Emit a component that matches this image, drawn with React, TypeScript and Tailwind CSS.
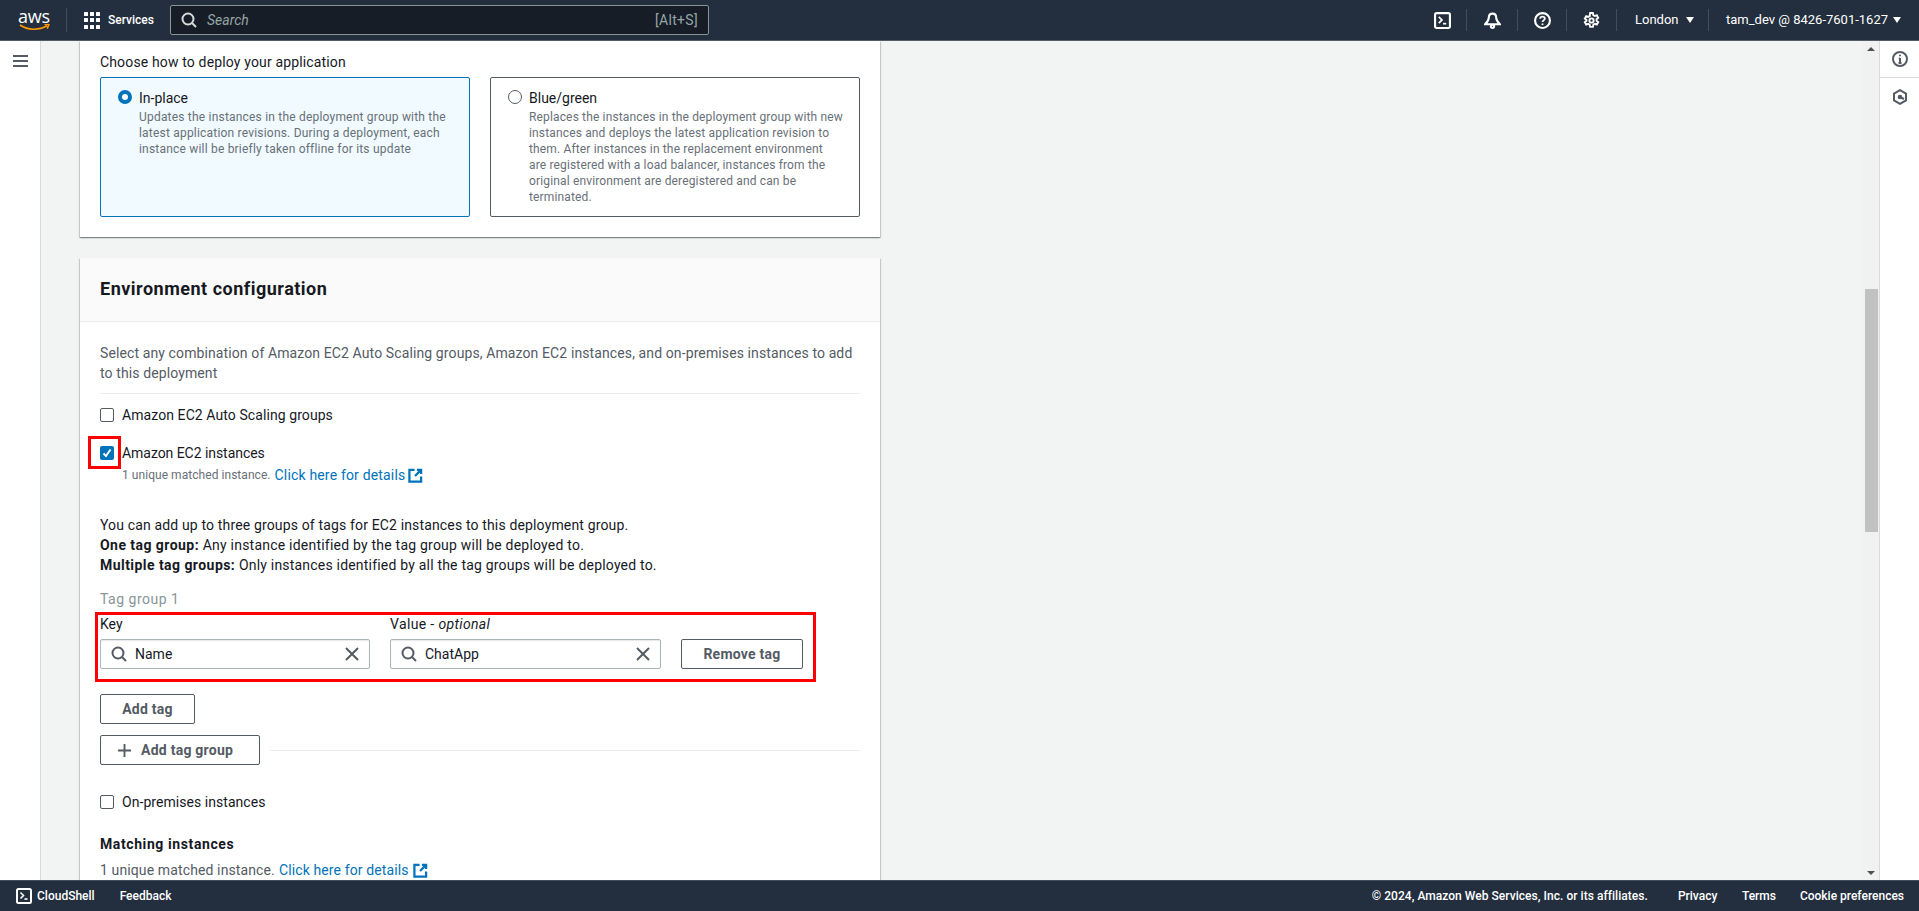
import React from "react";

const Sep = () => <div className="w-px h-[22px] bg-[#414d5c]" />;

const Terminal = ({ size = 16 }: { size?: number }) => (
  <svg width={size} height={size} viewBox="0 0 16 16" fill="none" stroke="currentColor" strokeWidth="2">
    <rect x="1" y="1" width="14" height="14" rx="1.5" />
    <path d="M4.5 4.5 7.5 7.5 4.5 10.5" strokeWidth="1.6" />
    <path d="M8.5 11h3" strokeWidth="1.6" />
  </svg>
);

const Ext = () => (
  <svg width="15" height="15" viewBox="0 0 16 16" fill="none" stroke="#0073bb" strokeWidth="2.4">
    <path d="M7 2H1.500v12.500H14V9" />
    <path d="M9.500 2h4.500v4.500" />
    <path d="M14 2 7.500 8.500" />
  </svg>
);

const Search = ({ color = "#545b64" }: { color?: string }) => (
  <svg width="16" height="16" viewBox="0 0 16 16" fill="none" stroke={color} strokeWidth="2">
    <circle cx="7" cy="7" r="5.5" />
    <path d="m11 11 4 4" />
  </svg>
);

const Close = () => (
  <svg width="14" height="14" viewBox="0 0 14 14" fill="none" stroke="#545b64" strokeWidth="2">
    <path d="M1 1l12 12M13 1 1 13" />
  </svg>
);

const Checkbox = ({ on = false }: { on?: boolean }) =>
  on ? (
    <span className="w-[14px] h-[14px] rounded-[2px] bg-[#0073bb] flex items-center justify-center shrink-0">
      <svg width="10" height="10" viewBox="0 0 10 10" fill="none" stroke="#fff" strokeWidth="2">
        <path d="M1.5 5.5 4 8l4.5-6.5" />
      </svg>
    </span>
  ) : (
    <span className="w-[14px] h-[14px] rounded-[2px] border border-[#545b64] bg-white shrink-0" />
  );

const Tile = ({ on, title, lines, width, track }: { on?: boolean; title: string; lines: string[]; width: string; track: string }) => (
  <div className={`${width} h-[140px] rounded-[2px] border px-[17px] pt-[10px] flex gap-[7px] ${on ? "border-[#0073bb] bg-[#f1faff]" : "border-[#545b64] bg-white"}`}>
    {on ? (
      <span className="w-[14px] h-[14px] mt-[2px] rounded-full border-[4px] border-[#0073bb] bg-white shrink-0" />
    ) : (
      <span className="w-[14px] h-[14px] mt-[2px] rounded-full border border-[#545b64] bg-white shrink-0" />
    )}
    <div>
      <div className="text-[14px] leading-[20px] text-[#16191f]">{title}</div>
      <div className={`text-[12px] leading-[16px] text-[#687078] mt-px ${track}`}>
        {lines.map((l) => (
          <div key={l} className="whitespace-nowrap">{l}</div>
        ))}
      </div>
    </div>
  </div>
);

const TagInput = ({ value, width }: { value: string; width: string }) => (
  <div className={`${width} h-[30px] rounded-[2px] border border-[#aab7b8] bg-white flex items-center pl-[10px] pr-[10px] shadow-[inset_0_1px_1px_0_rgba(0,28,36,0.1)]`}>
    <Search />
    <span className="ml-[8px] text-[14px] text-[#16191f] flex-1">{value}</span>
    <Close />
  </div>
);

const Btn = ({ children, width, className = "justify-center" }: { children: React.ReactNode; width: string; className?: string }) => (
  <div className={`${width} ${className} h-[30px] rounded-[2px] border border-[#545b64] bg-white flex items-center text-[14px] font-bold tracking-[0.25px] text-[#545b64] shrink-0`}>
    {children}
  </div>
);

export default function App() {
  return (
    <div className="h-[911px] w-[1919px] flex flex-col overflow-hidden bg-white font-['Roboto',sans-serif] text-[14px] text-[#16191f]">
      {/* top nav */}
      <header className="h-[41px] shrink-0 bg-[#232f3e] border-b border-[#545b64] flex items-center text-white">
        <div className="w-[66px] shrink-0 pl-[18px] flex flex-col items-start">
          <div className="w-[32px] flex flex-col items-center">
            <span className="text-[18px] leading-[14px] tracking-[-0.2px] font-['Open_Sans',sans-serif]">aws</span>
            <svg width="31" height="7" viewBox="0 0 31 7" fill="none" className="mt-[1px]">
              <path d="M1 1c8 5.5 19 5.5 27 .8" stroke="#ff9900" strokeWidth="1.7" />
              <path d="M25.5.6 30 .4 28.2 4.6" stroke="#ff9900" strokeWidth="1.5" />
            </svg>
          </div>
        </div>
        <div className="w-px h-[24px] bg-[#414d5c]" />
        <div className="ml-[17px] w-[16px] grid grid-cols-3 gap-[2.5px]">
          {Array.from({ length: 9 }).map((_, i) => (
            <span key={i} className="w-[4px] h-[4px] bg-white rounded-[0.5px]" />
          ))}
        </div>
        <span className="ml-[8px] w-[45px] text-[12px] font-medium whitespace-nowrap">Services</span>
        <div className="ml-[17px] w-[539px] h-[30px] rounded-[2px] border border-[#879596] bg-[#161d26] flex items-center px-[10px]">
          <Search color="#d5dbdb" />
          <span className="ml-[10px] italic text-[#95a5a6]">Search</span>
          <span className="ml-auto text-[#95a5a6] text-[14px] tracking-[0.3px]">[Alt+S]</span>
        </div>
        <div className="ml-auto flex items-center">
          <div className="w-[47px] flex justify-center"><Terminal size={17} /></div>
          <Sep />
          <div className="w-[50px] flex justify-center">
            <svg width="17" height="17" viewBox="0 0 16 16" fill="none" stroke="#fff" strokeWidth="2">
              <path d="M8 1.500c-2.400 0-3.500 1.800-3.500 4 0 2.700-1 3.800-3.500 6h14c-2.500-2.200-3.500-3.300-3.500-6 0-2.200-1.100-4-3.500-4Z" />
              <circle cx="8" cy="13.500" r="1.500" />
            </svg>
          </div>
          <Sep />
          <div className="w-[48px] flex justify-center">
            <svg width="17" height="17" viewBox="0 0 16 16" fill="none" stroke="#fff" strokeWidth="2">
              <circle cx="8" cy="8" r="7" />
              <path d="M5.800 6.300C5.800 5 6.800 4.300 8 4.300s2.200.8 2.200 1.900c0 1.700-2.200 1.700-2.200 3.300" strokeWidth="1.700" />
              <path d="M8 10.800v1.500" strokeWidth="1.700" />
            </svg>
          </div>
          <Sep />
          <div className="w-[49px] flex justify-center">
            <svg width="17" height="17" viewBox="0 0 16 16" fill="none" stroke="#fff" strokeWidth="1.800">
              <path d="M6.700 1h2.600l.4 2 1.400.8 1.900-.7 1.300 2.300-1.500 1.300v1.600l1.500 1.300-1.300 2.300-1.900-.7-1.400.8-.4 2H6.700l-.4-2-1.400-.8-1.900.7-1.300-2.300 1.500-1.300V7.500L1.700 6.200 3 3.900l1.900.7 1.400-.8Z" />
              <circle cx="8" cy="8" r="2" />
            </svg>
          </div>
          <Sep />
          <div className="w-[91px] pl-[18px] flex items-center gap-[7px] text-[13px]">
            London
            <span className="w-0 h-0 border-l-[4.500px] border-r-[4.500px] border-t-[6px] border-l-transparent border-r-transparent border-t-white" />
          </div>
          <Sep />
          <div className="w-[210px] pl-[17px] flex items-center gap-[6px] text-[13px] whitespace-nowrap">
            <span className="w-[161px]">tam_dev @ 8426-7601-1627</span>
            <span className="w-0 h-0 border-l-[4.500px] border-r-[4.500px] border-t-[6px] border-l-transparent border-r-transparent border-t-white" />
          </div>
        </div>
      </header>

      <div className="flex-1 min-h-0 flex">
        {/* left rail */}
        <aside className="w-[41px] shrink-0 bg-white border-r border-[#d5dbdb] pt-[14px] flex justify-center">
          <svg width="15" height="12" viewBox="0 0 15 12" stroke="#545b64" strokeWidth="2">
            <path d="M0 1h15M0 6h15M0 11h15" />
          </svg>
        </aside>

        {/* content */}
        <main className="flex-1 min-w-0 bg-[#f2f3f3] overflow-hidden pl-[39px]">
          <section className="w-[800px] h-[196px] bg-white shadow-[0_1px_1px_0_rgba(0,28,36,0.3),1px_1px_1px_0_rgba(0,28,36,0.15),-1px_1px_1px_0_rgba(0,28,36,0.15)] px-[20px] pt-[11px]">
            <div className="leading-[20px] tracking-[0.15px]">Choose how to deploy your application</div>
            <div className="mt-[5px] flex gap-[20px]">
              <Tile
                on
                width="w-[370px]"
                track="tracking-[0.2px]"
                title="In-place"
                lines={[
                  "Updates the instances in the deployment group with the",
                  "latest application revisions. During a deployment, each",
                  "instance will be briefly taken offline for its update",
                ]}
              />
              <Tile
                width="w-[370px]"
                track="tracking-[0.15px]"
                title="Blue/green"
                lines={[
                  "Replaces the instances in the deployment group with new",
                  "instances and deploys the latest application revision to",
                  "them. After instances in the replacement environment",
                  "are registered with a load balancer, instances from the",
                  "original environment are deregistered and can be",
                  "terminated.",
                ]}
              />
            </div>
          </section>

          <section className="mt-[21px] w-[800px] pb-[40px] bg-white shadow-[0_1px_1px_0_rgba(0,28,36,0.3),1px_1px_1px_0_rgba(0,28,36,0.15),-1px_1px_1px_0_rgba(0,28,36,0.15)]">
            <div className="h-[64px] bg-[#fafafa] border-b border-[#eaeded] px-[20px] flex items-center">
              <h2 className="text-[18px] font-bold leading-[22px] tracking-[0.5px] -mt-[2px]">Environment configuration</h2>
            </div>
            <div className="px-[20px] pt-[21px]">
              <p className="text-[#545b64] leading-[20px] tracking-[0.11px] pb-[10px] border-b border-[#eaeded]">
                Select any combination of Amazon EC2 Auto Scaling groups, Amazon EC2 instances, and on-premises instances to add
                <br />
                to this deployment
              </p>

              <div className="mt-[11px] flex items-center gap-[8px] h-[20px]">
                <Checkbox />
                <span className="tracking-[0.08px]">Amazon EC2 Auto Scaling groups</span>
              </div>

              <div className="mt-[18px] flex items-center gap-[8px] h-[20px] relative">
                <Checkbox on />
                <span className="tracking-[-0.05px]">Amazon EC2 instances</span>
                <span className="absolute left-[-12px] top-[-7px] w-[33px] h-[33px] border-[3px] border-[#f00]" />
              </div>
              <div className="pl-[22px] h-[20px] flex items-center mt-[2px]">
                <span className="text-[12px] text-[#687078] tracking-[0.05px]">1 unique matched instance.</span>
                <span className="ml-[4px] text-[#0073bb] tracking-[0.17px]">Click here for details</span>
                <span className="ml-[3px]"><Ext /></span>
              </div>

              <div className="mt-[30px] leading-[20px] tracking-[0.15px]">
                <div>You can add up to three groups of tags for EC2 instances to this deployment group.</div>
                <div className="tracking-[0.22px]"><b className="tracking-[0.45px]">One tag group:</b> Any instance identified by the tag group will be deployed to.</div>
                <div className="tracking-[0.2px]"><b className="tracking-[0.45px]">Multiple tag groups:</b> Only instances identified by all the tag groups will be deployed to.</div>
              </div>

              <div className="mt-[14px] leading-[20px] text-[#879596] tracking-[0.5px]">Tag group 1</div>

              <div className="relative mt-[5px] flex items-end gap-[20px] w-[703px]">
                <div>
                  <div className="leading-[20px] mb-[5px]">Key</div>
                  <TagInput value="Name" width="w-[270px]" />
                </div>
                <div>
                  <div className="leading-[20px] mb-[5px] tracking-[0.35px]">Value - <i>optional</i></div>
                  <TagInput value="ChatApp" width="w-[271px]" />
                </div>
                <Btn width="w-[122px]">Remove tag</Btn>
                <span className="absolute left-[-5px] top-[-2px] w-[721px] h-[70px] border-[3px] border-[#f00]" />
              </div>

              <div className="mt-[25px]">
                <Btn width="w-[95px]">Add tag</Btn>
              </div>

              <div className="mt-[11px] flex items-center">
                <Btn width="w-[160px]" className="justify-start pl-[16px] gap-[9px]">
                  <svg width="15" height="15" viewBox="0 0 16 16" stroke="#545b64" strokeWidth="2">
                    <path d="M8 1v14M1 8h14" />
                  </svg>
                  Add tag group
                </Btn>
                <div className="ml-[10px] flex-1 h-px bg-[#eaeded]" />
              </div>

              <div className="mt-[27px] flex items-center gap-[8px] h-[20px]">
                <Checkbox />
                <span className="tracking-[0.05px]">On-premises instances</span>
              </div>

              <div className="mt-[22px] font-bold leading-[20px] tracking-[0.6px]">Matching instances</div>
              <div className="mt-[6px] flex items-center leading-[20px] tracking-[0.12px]">
                <span className="text-[#545b64]">1 unique matched instance.</span>
                <span className="ml-[4px] text-[#0073bb]">Click here for details</span>
                <span className="ml-[4px]"><Ext /></span>
              </div>
            </div>
          </section>
        </main>

        {/* scrollbar */}
        <div className="w-[16px] shrink-0 bg-[#f1f1f1] flex flex-col items-center pt-[6px] pb-[5px]">
          <span className="w-0 h-0 border-l-[4px] border-r-[4px] border-b-[4px] border-l-transparent border-r-transparent border-b-[#505050]" />
          <div className="w-[13px] h-[243px] mt-[238px] bg-[#c1c1c1]" />
          <span className="mt-auto w-0 h-0 border-l-[4px] border-r-[4px] border-t-[4px] border-l-transparent border-r-transparent border-t-[#505050]" />
        </div>

        {/* right rail */}
        <aside className="w-[40px] shrink-0 bg-white border-l border-[#d5dbdb]">
          <div className="h-[37px] border-b border-[#d5dbdb] flex items-center justify-center">
            <svg width="16" height="16" viewBox="0 0 16 16" fill="none" stroke="#545b64" strokeWidth="2">
              <circle cx="8" cy="8" r="7" />
              <path d="M8 7v5M6.500 12h3M6.800 7.500H8" />
              <path d="M8 3.800v1.500" />
            </svg>
          </div>
          <div className="h-[38px] flex items-center justify-center">
            <svg width="16" height="16" viewBox="0 0 16 16" fill="none" stroke="#545b64" strokeWidth="2">
              <path d="M8 1.200 14 4.600v6.800l-6 3.400-6-3.400V4.600Z" />
              <circle cx="8" cy="8" r="1.300" fill="#545b64" />
              <path d="M8 8l4 2" />
            </svg>
          </div>
        </aside>
      </div>

      {/* footer */}
      <footer className="h-[31px] shrink-0 bg-[#232f3e] border-t border-[#414d5c] flex items-center text-white text-[12px] font-medium">
        <div className="ml-[16px] flex items-center gap-[5px]">
          <Terminal size={16} />
          <span>CloudShell</span>
        </div>
        <span className="ml-[25px]">Feedback</span>
        <div className="ml-auto flex items-center pr-[15px]">
          <span className="tracking-[0.04px]">© 2024, Amazon Web Services, Inc. or its affiliates.</span>
          <span className="ml-[30px] w-[38px] whitespace-nowrap">Privacy</span>
          <span className="ml-[26px] w-[33px] whitespace-nowrap">Terms</span>
          <span className="ml-[25px]">Cookie preferences</span>
        </div>
      </footer>
    </div>
  );
}
